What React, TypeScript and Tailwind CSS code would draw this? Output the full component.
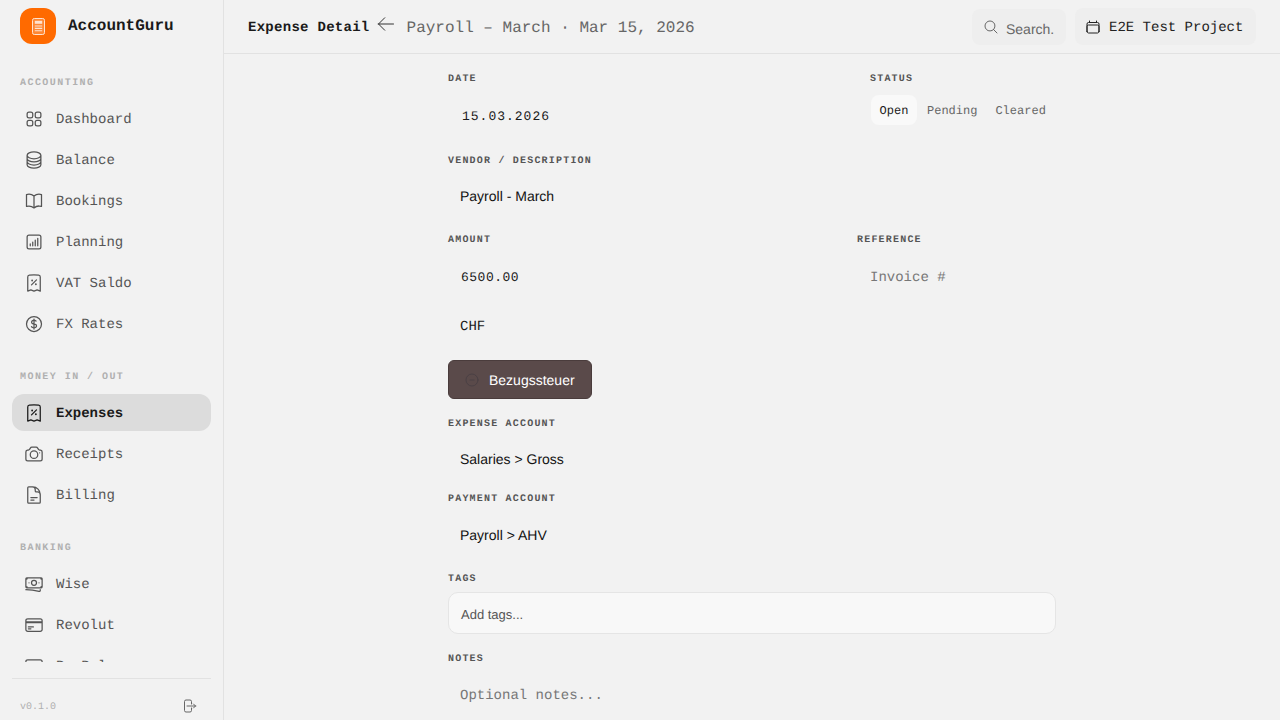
import type { IconType } from "react-icons";
import {
  HiOutlineArrowLeft,
  HiOutlineArrowRightOnRectangle,
  HiOutlineBanknotes,
  HiOutlineBookOpen,
  HiOutlineCalendar,
  HiOutlineCamera,
  HiOutlineChartBarSquare,
  HiOutlineCircleStack,
  HiOutlineCreditCard,
  HiOutlineCurrencyDollar,
  HiOutlineDocumentText,
  HiOutlineMagnifyingGlass,
  HiOutlineMinusCircle,
  HiOutlineReceiptPercent,
  HiOutlineSquares2X2,
} from "react-icons/hi2";

const MONO = "font-['Liberation_Mono',monospace]";
const SANS = "font-['Liberation_Sans',sans-serif]";

type NavItem = { label: string; icon: IconType; active?: boolean };

const NAV: { title: string; items: NavItem[] }[] = [
  {
    title: "ACCOUNTING",
    items: [
      { label: "Dashboard", icon: HiOutlineSquares2X2 },
      { label: "Balance", icon: HiOutlineCircleStack },
      { label: "Bookings", icon: HiOutlineBookOpen },
      { label: "Planning", icon: HiOutlineChartBarSquare },
      { label: "VAT Saldo", icon: HiOutlineReceiptPercent },
      { label: "FX Rates", icon: HiOutlineCurrencyDollar },
    ],
  },
  {
    title: "MONEY IN / OUT",
    items: [
      { label: "Expenses", icon: HiOutlineReceiptPercent, active: true },
      { label: "Receipts", icon: HiOutlineCamera },
      { label: "Billing", icon: HiOutlineDocumentText },
    ],
  },
  {
    title: "BANKING",
    items: [
      { label: "Wise", icon: HiOutlineBanknotes },
      { label: "Revolut", icon: HiOutlineCreditCard },
      { label: "PayPal", icon: HiOutlineCreditCard },
    ],
  },
];

function LogoMark() {
  return (
    <svg viewBox="0 0 13 17" className="h-[17px] w-[13px]" fill="none">
      <rect x="0.5" y="0.5" width="12" height="16" rx="1.8" fill="#ffffff" fillOpacity="0.2" stroke="#ffe3cf" />
      <rect x="2.8" y="2.8" width="7.4" height="3" fill="#ffe3cf" />
      <path d="M2.8 8h7.4M2.8 10.4h7.4M2.8 12.8h7.4" stroke="#ffe3cf" strokeWidth="1.1" />
    </svg>
  );
}

function FieldLabel({ children }: { children: string }) {
  return (
    <div className={`${MONO} h-3 pt-[2px] text-[10px] leading-[10px] font-bold tracking-[0.12em] text-[#555555]`}>
      {children}
    </div>
  );
}

function Sidebar() {
  return (
    <aside className="flex h-full w-[224px] shrink-0 flex-col border-r border-[#e2e2e2]">
      <div className="flex h-[54px] shrink-0 items-center gap-3 px-5 pb-[2px]">
        <span className="flex h-9 w-9 items-center justify-center rounded-xl bg-[#ff6a00]">
          <LogoMark />
        </span>
        <span className={`${MONO} text-base font-bold text-[#1a1a1a]`}>AccountGuru</span>
      </div>

      <nav className="min-h-0 flex-1 overflow-hidden px-3 pt-[23px]">
        {NAV.map((group) => (
          <div key={group.title} className="mb-[29px]">
            <div className={`${MONO} mb-[11px] h-3 px-2 pt-[2px] text-[10px] leading-[10px] font-bold tracking-[1.45px] text-[#b0b0b0]`}>
              {group.title}
            </div>
            <div className="flex flex-col gap-1">
              {group.items.map((item) => {
                const Icon = item.icon;
                return (
                  <div
                    key={item.label}
                    className={`flex h-[37px] items-center gap-3 rounded-xl px-3 ${MONO} text-sm ${
                      item.active ? "bg-[#dcdcdc] font-bold text-[#1a1a1a]" : "text-[#555555]"
                    }`}
                  >
                    <Icon className="h-5 w-5 shrink-0" />
                    <span className="pt-[2px]">{item.label}</span>
                  </div>
                );
              })}
            </div>
          </div>
        ))}
      </nav>

      <div className="mx-3 mt-4 flex h-[42px] shrink-0 items-center justify-between border-t border-[#e2e2e2] px-2 pt-[12px]">
        <span className={`${MONO} pt-[4px] text-[10px] text-[#b0b0b0]`}>v0.1.0</span>
        <HiOutlineArrowRightOnRectangle className="mr-[6px] h-4 w-4 text-[#666666]" />
      </div>
    </aside>
  );
}

function Header() {
  return (
    <header className="flex h-[54px] shrink-0 items-center justify-between border-b border-[#e2e2e2] pr-6 pl-6">
      <div className="mt-[2px] flex items-center">
        <span className={`${MONO} text-sm font-bold tracking-[0.02em] text-[#1a1a1a]`}>Expense Detail</span>
        <HiOutlineArrowLeft strokeWidth={1.2} className="mb-[7px] ml-[6px] h-5 w-5 text-[#333333]" />
        <span className={`${MONO} ml-[11px] text-base text-[#666666]`}>Payroll – March · Mar 15, 2026</span>
      </div>
      <div className="flex items-center gap-[9px]">
        <div className={`${SANS} mt-px flex h-9 w-[94px] items-center gap-[7px] rounded-lg bg-[#eeeeee] pl-[11px] text-sm text-[#666666]`}>
          <HiOutlineMagnifyingGlass className="h-4 w-4 shrink-0" />
          <span className="pt-[3px]">Search.</span>
        </div>
        <div className={`${MONO} flex h-[37px] w-[181px] items-center gap-2 rounded-lg bg-[#eeeeee] pl-[10px] text-sm text-[#222222]`}>
          <HiOutlineCalendar className="h-4 w-4 shrink-0" />
          <span className="pt-[2px]">E2E Test Project</span>
        </div>
      </div>
    </header>
  );
}

function ExpenseForm() {
  return (
    <div className="mx-auto w-[608px] pt-[19px]">
      <div className="flex justify-between">
        <div>
          <FieldLabel>DATE</FieldLabel>
          <div className={`${MONO} px-[14px] pt-[24px] text-[13px] leading-[16px] tracking-[1px] text-[#1a1a1a]`}>15.03.2026</div>
        </div>
        <div className="w-[186px]">
          <FieldLabel>STATUS</FieldLabel>
          <div className={`${MONO} mt-[10px] flex items-center pl-px text-xs text-[#666666]`}>
            <span className="flex h-[30px] w-[46px] items-center justify-center rounded-lg bg-[#f9f9f9] pt-[2px] text-[#1a1a1a]">Open</span>
            <span className="ml-[10px] pt-[2px]">Pending</span>
            <span className="ml-[18px] pt-[2px]">Cleared</span>
          </div>
        </div>
      </div>

      <div className="mt-[30px]">
        <FieldLabel>VENDOR / DESCRIPTION</FieldLabel>
        <div className={`${SANS} px-3 pt-[21px] text-sm leading-[16px] text-[#111111]`}>Payroll - March</div>
      </div>

      <div className="mt-[30px] flex justify-between">
        <div>
          <FieldLabel>AMOUNT</FieldLabel>
          <div className={`${MONO} pt-[24px] pl-[13px] text-[13px] leading-[16px] tracking-[0.5px] text-[#1a1a1a]`}>6500.00</div>
        </div>
        <div className="w-[199px]">
          <FieldLabel>REFERENCE</FieldLabel>
          <div className={`${MONO} pt-[24px] pl-[13px] text-sm leading-[16px] text-[#777777]`}>Invoice #</div>
        </div>
      </div>

      <div className={`${MONO} px-3 pt-[33px] text-sm leading-[16px] text-[#1a1a1a]`}>CHF</div>

      <div className={`${SANS} mt-[25px] flex h-[39px] w-[144px] items-center gap-[9px] rounded-md border border-[#4a3c3c] bg-[#5a4a4a] pl-[15px] text-sm text-white`}>
        <HiOutlineMinusCircle className="h-4 w-4 shrink-0 text-[#4a4044]" />
        Bezugssteuer
      </div>

      <div className="mt-[19px]">
        <FieldLabel>EXPENSE ACCOUNT</FieldLabel>
        <div className={`${SANS} px-3 pt-[21px] text-sm leading-[16px] text-[#111111]`}>{"Salaries > Gross"}</div>
      </div>

      <div className="mt-[26px]">
        <FieldLabel>PAYMENT ACCOUNT</FieldLabel>
        <div className={`${SANS} px-3 pt-[22px] text-sm leading-[16px] text-[#111111]`}>{"Payroll > AHV"}</div>
      </div>

      <div className="mt-[30px]">
        <FieldLabel>TAGS</FieldLabel>
        <div className={`${SANS} mt-[7px] flex h-[42px] items-center rounded-[10px] border border-[#e5e5e5] bg-[#f8f8f8] px-3 pt-[4px] text-[13px] text-[#555555]`}>
          Add tags...
        </div>
      </div>

      <div className="mt-[19px]">
        <FieldLabel>NOTES</FieldLabel>
        <div className={`${MONO} px-3 pt-[23px] text-sm leading-[16px] text-[#777777]`}>Optional notes...</div>
      </div>
    </div>
  );
}

export default function App() {
  return (
    <div className="flex h-screen w-full overflow-hidden bg-[#f2f2f2] [text-rendering:geometricPrecision]">
      <Sidebar />
      <main className="flex min-w-0 flex-1 flex-col">
        <Header />
        <div className="min-h-0 flex-1 overflow-hidden">
          <ExpenseForm />
        </div>
      </main>
    </div>
  );
}
